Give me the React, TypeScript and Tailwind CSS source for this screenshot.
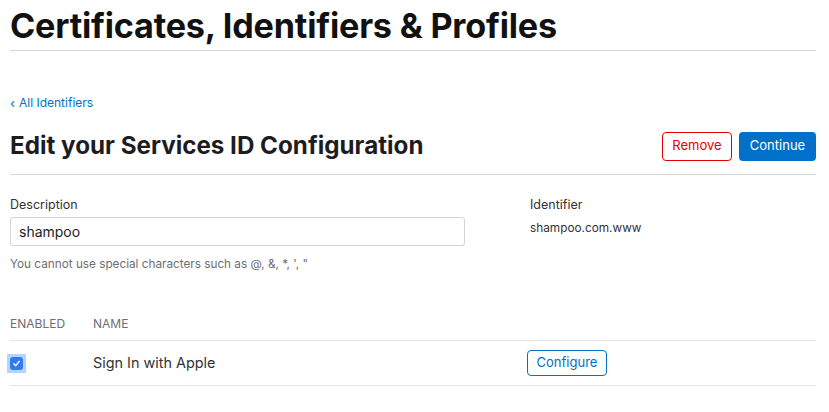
import React from "react";

export default function App() {
  return (
    <div className="w-[829px] h-[412px] bg-white overflow-hidden font-['Inter',sans-serif] text-[#1d1d1f]">
      <div className="pl-[10px] pr-[13px]">
        <div className="pt-[7px] pb-[5px] border-b border-[#d6d6d6]">
          <h1 className="text-[34.2px] leading-[38px] font-bold tracking-[-0.2px] text-[#111]">Certificates, Identifiers &amp; Profiles</h1>
        </div>
        <div className="pt-[44px]">
          <a className="text-[12px] leading-[16px] text-[#0070c9] flex items-center gap-[4px]">
            <span className="text-[13px]">‹</span>All Identifiers
          </a>
        </div>
        <div className="flex items-center justify-between pt-[20px] pb-[13px] border-b border-[#d6d6d6]">
          <h2 className="text-[24.2px] leading-[30px] font-bold text-[#1d1d1f]">Edit your Services ID Configuration</h2>
          <div className="flex gap-[7px]">
            <button className="h-[29px] w-[70px] rounded-[4px] border border-[#e30000] text-[#e30000] text-[13px] bg-white">Remove</button>
            <button className="h-[29px] w-[77px] rounded-[4px] bg-[#0070c9] text-white text-[13px]">Continue</button>
          </div>
        </div>
        <div className="flex pt-[22px]">
          <div className="w-[520px]">
            <div className="text-[12.5px] leading-[16px] text-[#333]">Description</div>
            <div className="mt-[4px] w-[455px] h-[29px] rounded-[3px] border border-[#d2d2d7] flex items-center px-[8px] text-[14px] text-[#1d1d1f]">shampoo</div>
            <div className="mt-[10px] text-[11.75px] leading-[16px] text-[#6e6e73]">You cannot use special characters such as @, &amp;, *, ', "</div>
          </div>
          <div>
            <div className="text-[12.5px] leading-[16px] text-[#333]">Identifier</div>
            <div className="mt-[7px] text-[11.8px] leading-[16px] text-[#333]">shampoo.com.www</div>
          </div>
        </div>
        <div className="mt-[44px] flex text-[12px] leading-[16px] text-[#6e6e73] pb-[8px] border-b border-[#e5e5e5]">
          <div className="w-[83px]">ENABLED</div>
          <div>NAME</div>
        </div>
        <div className="flex items-center h-[45px] border-b border-[#e5e5e5]">
          <div className="w-[83px] -ml-[3px]">
            <div className="w-[19px] h-[19px] bg-[#b4d5fb] flex items-center justify-center">
              <div className="w-[13px] h-[13px] rounded-[3px] bg-[#2f7bf5] flex items-center justify-center">
                <svg width="9" height="9" viewBox="0 0 10 10"><path d="M2 5.2 L4.2 7.4 L8 2.6" stroke="white" strokeWidth="1.6" fill="none" strokeLinecap="round" strokeLinejoin="round"/></svg>
              </div>
            </div>
          </div>
          <div className="w-[437px] pl-[3px] text-[14.4px] text-[#333]">Sign In with Apple</div>
          <button className="h-[26px] w-[80px] rounded-[4px] border border-[#0070c9] text-[#0070c9] text-[13px] bg-white">Configure</button>
        </div>
      </div>
    </div>
  );
}
